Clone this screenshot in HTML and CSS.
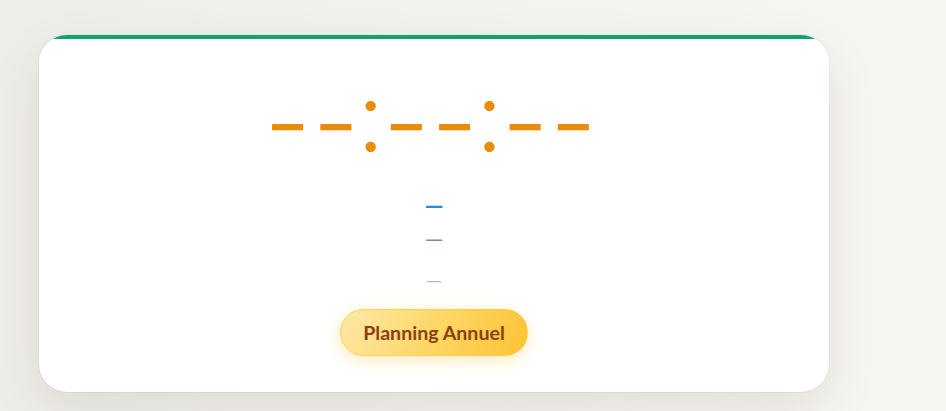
FILE: index.html
```html
<!DOCTYPE html>
<html lang="fr">
<head>
<meta charset="utf-8">
<title>Horloge</title>
<link rel="stylesheet" href="styles.css">
</head>
<body>
<main class="page">
  <section class="card">
    <div class="clock"><span class="seg">--</span><span class="sep">:</span><span class="seg">--</span><span class="sep">:</span><span class="seg">--</span></div>
    <div class="date">—</div>
    <div class="sub">—</div>
    <div class="note">—</div>
    <button class="btn">Planning Annuel</button>
  </section>
</main>
</body>
</html>
```
FILE: styles.css
```css
* { box-sizing: border-box; }
html, body { margin: 0; height: 100%; }
body {
  background: linear-gradient(90deg, #efede9 0%, #f4f2ee 50%, #f8f6f1 100%);
  font-family: "Lato", "Noto Sans", sans-serif;
  overflow: hidden;
}
.page {
  padding: 35px 0 0 39px;
}
.card {
  position: relative;
  overflow: hidden;
  width: 790px;
  height: 357px;
  padding-top: 4px;
  background: #ffffff;
  border-radius: 28px;
  box-shadow: 0 18px 50px rgba(60, 50, 30, 0.10), 0 0 0 1px rgba(0, 0, 0, 0.04);
  display: flex;
  flex-direction: column;
  align-items: center;
}
.card::before {
  content: "";
  position: absolute;
  left: 0;
  right: 0;
  top: 0;
  height: 4px;
  background: #10a36c;
}
.clock {
  margin-top: 26px;
  margin-left: -5px;
  font-family: "Inter", sans-serif;
  font-weight: 300;
  font-size: 102px;
  line-height: 102px;
  height: 102px;
  color: #ea8b0b;
  white-space: nowrap;
}
.seg {
  letter-spacing: 2px;
}
.sep {
  font-size: 97px;
  vertical-align: 8px;
  margin: 0 -1px 0 -4px;
}
.date {
  margin-top: 26px;
  font-size: 24px;
  line-height: 24px;
  font-weight: 700;
  color: #1d8fd6;
}
.sub {
  margin-top: 9px;
  font-size: 24px;
  line-height: 24px;
  color: #7b8aa6;
}
.note {
  margin-top: 20px;
  font-size: 21px;
  line-height: 20px;
  color: #b3bac6;
}
.btn {
  margin-top: 19px;
  height: 47px;
  padding: 0 22px;
  border: 1px solid rgba(250, 200, 70, 0.6);
  border-radius: 24px;
  background: linear-gradient(120deg, #fee9aa 0%, #fdd766 50%, #fcc332 100%);
  box-shadow: 0 4px 16px rgba(252, 196, 50, 0.35);
  font-family: "Lato", sans-serif;
  font-weight: 700;
  font-size: 19.6px;
  color: #8b3f14;
  cursor: pointer;
}
```
